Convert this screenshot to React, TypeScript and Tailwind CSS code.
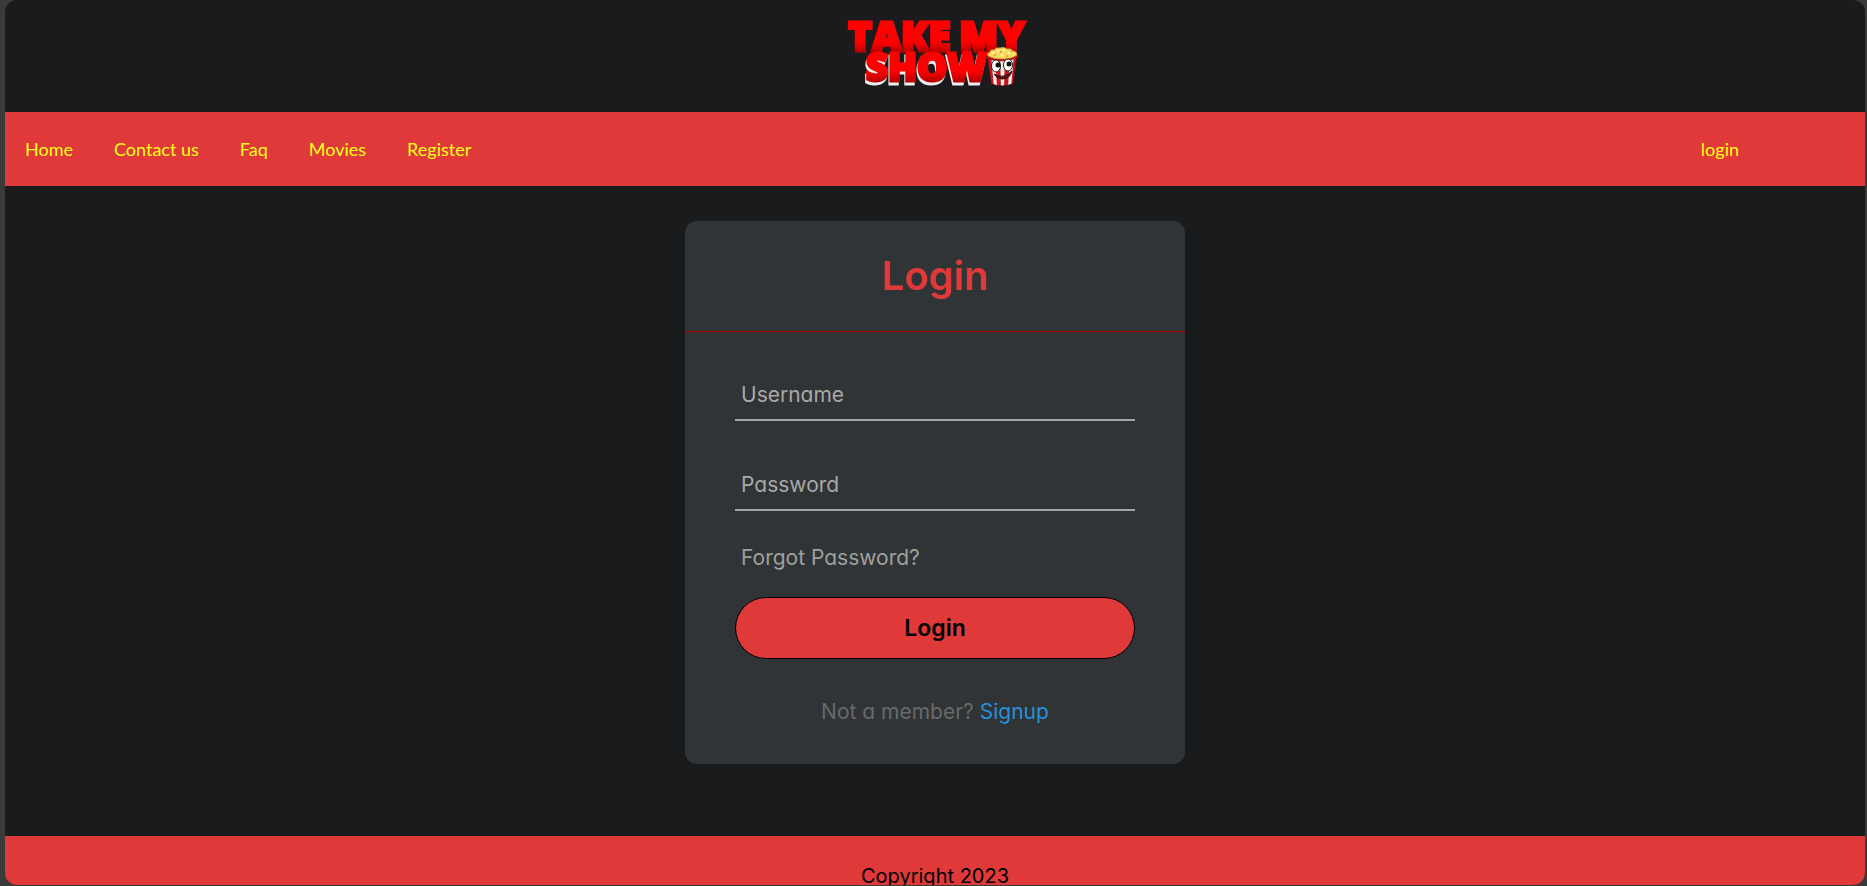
const navLinks = ["Home", "Contact us", "Faq", "Movies", "Register"];

function Logo() {
  return (
    <svg viewBox="0 0 190 80" className="h-20 w-[190px]" role="img" aria-label="Take My Show">
      <defs>
        <linearGradient id="top" x1="0" y1="10" x2="0" y2="43" gradientUnits="userSpaceOnUse">
          <stop offset="0.65" stopColor="#ff0000" />
          <stop offset="1" stopColor="#a80000" />
        </linearGradient>
        <linearGradient id="bottom" x1="0" y1="40" x2="0" y2="73" gradientUnits="userSpaceOnUse">
          <stop offset="0.6" stopColor="#ff0000" />
          <stop offset="1" stopColor="#a80000" />
        </linearGradient>
        <clipPath id="bucket">
          <path d="M147 45 L177 45 L173 73 Q162 77 151 73 Z" />
        </clipPath>
      </defs>
      <g fontFamily="Open Sans, sans-serif" fontWeight="800" strokeWidth="3" strokeLinejoin="miter" strokeMiterlimit="3">
        <g fontSize="40" fill="url(#top)" stroke="url(#top)">
          <text x="8" y="40">TAKE</text>
          <text x="119" y="40">MY</text>
        </g>
        <text
          x="26"
          y="70"
          fontSize="38"
          fill="url(#bottom)"
          stroke="url(#bottom)"
          className="[filter:drop-shadow(-1px_3px_0_#eeeeee)]"
        >
          SHOW
        </text>
      </g>
      <g clipPath="url(#bucket)">
        <rect x="144" y="42" width="36" height="36" fill="#f5efe6" />
        <path d="M146 43h5l3 34h-4zM155 43h5l1 34h-4zM165 43h5l-2 34h-4zM174 43h5l-4 34h-4z" fill="#c9131d" />
      </g>
      <path d="M147 45 L151 73 Q162 77 173 73 L177 45" fill="none" stroke="#3a0808" strokeWidth="1" />
      <path d="M147 46 Q162 52 178 45" fill="none" stroke="#b80e18" strokeWidth="3" />
      <path
        d="M148 45 Q146 42 150 41 Q150 38 154 39 Q156 36 160 37 Q164 35 167 38 Q171 37 173 40 Q177 40 177 44 Q172 48 162 48 Q153 48 148 45Z"
        fill="#f8d95c"
        stroke="#c8922a"
        strokeWidth="0.8"
      />
      <g fill="#fdf0a0">
        <circle cx="153" cy="42" r="1.3" /><circle cx="158" cy="40" r="1.4" />
        <circle cx="164" cy="39" r="1.3" /><circle cx="169" cy="42" r="1.4" />
        <circle cx="162" cy="44" r="1.4" /><circle cx="174" cy="43" r="1.1" />
      </g>
      <g fill="#d9a62c">
        <circle cx="155" cy="44" r="1" /><circle cx="161" cy="41" r="1" />
        <circle cx="167" cy="45" r="1" /><circle cx="171" cy="40" r="1" />
      </g>
      <ellipse cx="156" cy="55" rx="4.5" ry="6" fill="#fff" stroke="#222" />
      <ellipse cx="168" cy="54" rx="4.5" ry="6" fill="#fff" stroke="#222" />
      <circle cx="158" cy="54" r="2.5" fill="#111" />
      <circle cx="169" cy="53" r="2.5" fill="#111" />
      <path d="M154 63 Q163 69 172 60 Q170 68 162 68 Q157 68 154 63Z" fill="#7b0c12" stroke="#111" />
    </svg>
  );
}

function Field({ id, label, type }: { id: string; label: string; type: string }) {
  return (
    <div className="relative">
      <input
        id={id}
        type={type}
        required
        className="peer block h-[52px] w-full border-b-2 border-[#a5a5a3] bg-transparent px-[6px] text-[21px] text-white outline-none"
      />
      <label
        htmlFor={id}
        className="pointer-events-none absolute left-[6px] top-[10px] text-[21px] leading-8 text-[#a8a8a6] peer-valid:opacity-0"
      >
        {label}
      </label>
    </div>
  );
}

export default function App() {
  return (
    <div className="h-screen overflow-hidden bg-[#3a3a3a] pb-px pl-[5px] pr-[2px] font-[Inter,sans-serif] [font-feature-settings:'cv11']">
      <div className="flex h-full flex-col overflow-hidden rounded-xl bg-[#1a1b1c]">
        <header className="flex shrink-0 justify-center pb-[21px] pt-[11px]">
          <Logo />
        </header>
        <nav className="flex h-[74px] shrink-0 items-center justify-between bg-[#df3939] pl-5 pr-[126px] font-[Lato,sans-serif] text-lg text-[#ffff19]">
          <div className="flex gap-[41px]">
            {navLinks.map((name) => (
              <a key={name} href="#">{name}</a>
            ))}
          </div>
          <a href="#">login</a>
        </nav>
        <main className="flex shrink-0 justify-center px-4 pb-[72px] pt-[35px]">
          <section className="w-full max-w-[500px] rounded-xl bg-[#303436] shadow-[0_10px_15px_rgba(0,0,0,0.05)]">
            <h1 className="flex h-[111px] items-center justify-center border-b border-[#b00000] text-[40px] font-semibold text-[#df3939]">
              Login
            </h1>
            <form className="flex flex-col px-[50px] pb-9 pt-[37px]" onSubmit={(e) => e.preventDefault()}>
              <div className="flex flex-col gap-[38px]">
                <Field id="username" label="Username" type="text" />
                <Field id="password" label="Password" type="password" />
              </div>
              <a href="#" className="mt-[31px] self-start pl-[6px] text-[21px] leading-8 text-[#a0a09e]">
                Forgot Password?
              </a>
              <button
                type="submit"
                className="mt-[23px] h-[62px] rounded-full border border-black bg-[#df3939] text-[23px] font-semibold text-black"
              >
                Login
              </button>
              <p className="mt-[37px] text-center text-[21px] leading-8 text-[#696969]">
                Not a member? <a href="#" className="text-[#2691d9]">Signup</a>
              </p>
            </form>
          </section>
        </main>
        <footer className="shrink-0 bg-[#df3939] pb-6 pt-[25px] text-center text-xl leading-[30px] text-black">
          Copyright 2023
        </footer>
      </div>
    </div>
  );
}
